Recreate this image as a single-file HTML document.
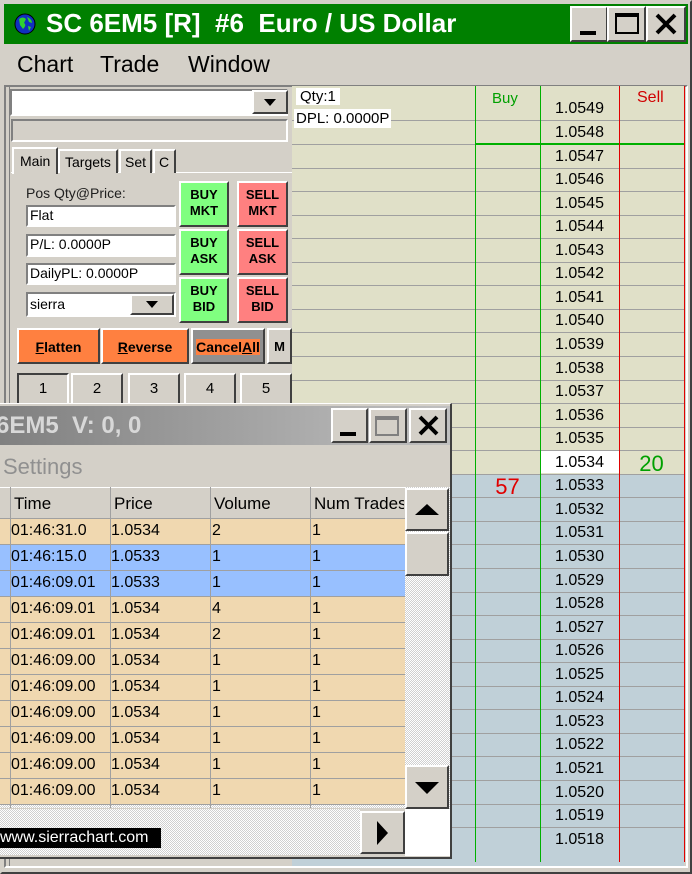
<!DOCTYPE html>
<html><head><style>
*{box-sizing:border-box;margin:0;padding:0}
body{width:692px;height:874px;background:#d4d0c8;position:relative;overflow:hidden;font-family:"Liberation Sans",sans-serif}
.a{position:absolute}
.btn3{background:#d4d0c8;border:2px solid;border-color:#fff #404040 #404040 #fff}
.sunk{border:2px solid;border-color:#808080 #fff #fff #808080}
.inp{position:absolute;background:#fff;border:2px solid;border-color:#808080 #fff #fff #808080;font-size:14px;padding-left:2px;line-height:17px}
.tb{position:absolute;font-weight:bold;font-size:13px;text-align:center;line-height:16px;border:2px solid;border-color:#fff #404040 #404040 #fff;padding-top:4px}
.g{background:#80ff80}.r{background:#ff8080}
.row{position:absolute;left:292px;width:392px;height:24px;border-bottom:1px solid #a0a0a0;font-size:16px}
.row span{position:absolute;left:248px;width:79px;text-align:center;top:3px}
.tr{position:absolute;left:0;width:405px;height:26px;border-bottom:1px solid #a0a0a0;font-size:16px}
.tr span{position:absolute;top:3px}
.num{position:absolute;top:373px;height:32px;font-size:15px;text-align:center;line-height:28px}
</style></head><body>
<div class="a" style="left:0;top:0;width:692px;height:874px;border:2px solid;border-color:#d4d0c8 #404040 #404040 #d4d0c8"></div>
<div class="a" style="left:4px;top:4px;width:684px;height:40px;background:#008000"></div>
<svg class="a" style="left:14px;top:13px" width="22" height="22"><circle cx="11" cy="11" r="10" fill="#1030c0" stroke="#000"/><path d="M5 6 Q9 3 12 6 L10 10 Q13 12 9 16 L6 12Z M13 4 Q18 6 18 10 L15 9Z M14 13 L17 14 L15 18Z" fill="#30d030"/></svg>
<div class="a" style="left:46px;top:8px;color:#fff;font-weight:bold;font-size:26px;white-space:pre">SC 6EM5 [R]  #6  Euro / US Dollar</div>
<div class="a btn3" style="left:570px;top:6px;width:38px;height:36px"><div class="a" style="left:8px;top:23px;width:16px;height:4px;background:#000"></div></div>
<div class="a btn3" style="left:607px;top:6px;width:39px;height:36px"><div class="a" style="left:6px;top:5px;width:24px;height:21px;border:2px solid #000;border-top-width:4px"></div></div>
<div class="a btn3" style="left:646px;top:6px;width:40px;height:36px"><svg class="a" style="left:7px;top:5px" width="22" height="22"><path d="M2 2L20 20M20 2L2 20" stroke="#000" stroke-width="4"/></svg></div>
<div class="a" style="left:17px;top:51px;font-size:23px">Chart</div>
<div class="a" style="left:100px;top:51px;font-size:23px">Trade</div>
<div class="a" style="left:188px;top:51px;font-size:23px">Window</div>
<div class="a" style="left:4px;top:85px;width:684px;height:783px;border:2px solid;border-color:#808080 #fff #fff #808080"></div>
<div class="a" style="left:10px;top:89px;width:278px;height:27px;background:#fff;border:2px solid;border-color:#808080 #fff #fff #808080"></div>
<div class="a btn3" style="left:252px;top:90px;width:36px;height:24px"><div class="a" style="left:10px;top:7px;border-left:6px solid transparent;border-right:6px solid transparent;border-top:7px solid #000"></div></div>
<div class="a sunk" style="left:11px;top:119px;width:277px;height:23px"></div>
<div class="a" style="left:11px;top:172px;width:281px;height:1px;background:#fff"></div>
<div class="a btn3" style="left:12px;top:147px;width:46px;height:27px;border-bottom:none;font-size:14px;padding:4px 0 0 6px">Main</div>
<div class="a btn3" style="left:58px;top:149px;width:60px;height:24px;border-bottom:none;font-size:14px;padding:3px 0 0 5px">Targets</div>
<div class="a btn3" style="left:119px;top:149px;width:33px;height:24px;border-bottom:none;font-size:14px;padding:3px 0 0 4px">Set</div>
<div class="a btn3" style="left:153px;top:149px;width:23px;height:24px;border-bottom:none;font-size:14px;padding:3px 0 0 4px">C</div>
<div class="a" style="left:26px;top:185px;font-size:14px;color:#202020">Pos Qty@Price:</div>
<div class="inp" style="left:26px;top:205px;width:150px;height:22px">Flat</div>
<div class="inp" style="left:26px;top:234px;width:150px;height:23px">P/L: 0.0000P</div>
<div class="inp" style="left:26px;top:263px;width:150px;height:22px">DailyPL: 0.0000P</div>
<div class="inp" style="left:26px;top:292px;width:150px;height:25px;padding-top:2px">sierra</div>
<div class="a btn3" style="left:130px;top:294px;width:44px;height:21px"><div class="a" style="left:14px;top:5px;border-left:6px solid transparent;border-right:6px solid transparent;border-top:7px solid #000"></div></div>
<div class="tb g" style="left:179px;top:181px;width:50px;height:46px">BUY<br>MKT</div>
<div class="tb r" style="left:237px;top:181px;width:51px;height:46px">SELL<br>MKT</div>
<div class="tb g" style="left:179px;top:229px;width:50px;height:46px">BUY<br>ASK</div>
<div class="tb r" style="left:237px;top:229px;width:51px;height:46px">SELL<br>ASK</div>
<div class="tb g" style="left:179px;top:277px;width:50px;height:46px">BUY<br>BID</div>
<div class="tb r" style="left:237px;top:277px;width:51px;height:46px">SELL<br>BID</div>
<div class="tb" style="left:17px;top:328px;width:83px;height:36px;background:#ff8040;font-size:14px;padding-top:9px"><u>F</u>latten</div>
<div class="tb" style="left:101px;top:328px;width:88px;height:36px;background:#ff8040;font-size:14px;padding-top:9px"><u>R</u>everse</div>
<div class="tb" style="left:191px;top:328px;width:74px;height:36px;background:#909090;font-size:14px;padding-top:9px"><span style="background:#ff8040">Cancel<u>A</u>ll</span></div>
<div class="tb" style="left:267px;top:328px;width:25px;height:36px;background:#d4d0c8;font-size:13px;padding-top:9px">M</div>
<div class="num sunk" style="left:17px;width:52px;border-color:#404040 #fff #fff #404040">1</div>
<div class="num btn3" style="left:71px;width:52px">2</div>
<div class="num btn3" style="left:128px;width:52px">3</div>
<div class="num btn3" style="left:184px;width:52px">4</div>
<div class="num btn3" style="left:240px;width:52px">5</div>
<div class="a" style="left:6px;top:86px;width:4px;height:780px;border-right:1px solid #808080"></div>
<div class="a" style="left:292px;top:86px;width:392px;height:388px;background:#e0e0c8"></div>
<div class="a" style="left:292px;top:474px;width:392px;height:392px;background:#c0d0d8"></div>
<div class="a" style="left:292px;top:86px;width:392px;height:35px;border-bottom:1px solid #a0a0a0;font-size:16px">
<span class="a" style="left:248px;top:14px;width:79px;text-align:center">1.0549</span></div>
<div class="a" style="left:296px;top:88px;background:#fff;font-size:15px;padding:0 4px 0 4px">Qty:1</div>
<div class="a" style="left:294px;top:109px;background:#fff;font-size:15px;padding:1px 2px">DPL: 0.0000P</div>
<div class="a" style="left:492px;top:90px;color:#00a000;font-size:15px">Buy</div>
<div class="a" style="left:637px;top:89px;color:#d00000;font-size:16px">Sell</div>
<div class="row" style="top:121px"><span>1.0548</span></div>
<div class="a" style="left:475px;top:143px;width:209px;height:2px;background:#00b000"></div>
<div class="row" style="top:145px"><span>1.0547</span></div>
<div class="row" style="top:168px"><span>1.0546</span></div>
<div class="row" style="top:192px"><span>1.0545</span></div>
<div class="row" style="top:215px"><span>1.0544</span></div>
<div class="row" style="top:239px"><span>1.0543</span></div>
<div class="row" style="top:262px"><span>1.0542</span></div>
<div class="row" style="top:286px"><span>1.0541</span></div>
<div class="row" style="top:309px"><span>1.0540</span></div>
<div class="row" style="top:333px"><span>1.0539</span></div>
<div class="row" style="top:357px"><span>1.0538</span></div>
<div class="row" style="top:380px"><span>1.0537</span></div>
<div class="row" style="top:404px"><span>1.0536</span></div>
<div class="row" style="top:427px"><span>1.0535</span></div>
<div class="row" style="top:451px"><span style="background:#fff;top:0;height:22px;padding-top:3px">1.0534</span><span style="left:327px;width:65px;color:#00a000;font-size:22px;top:0">20</span></div>
<div class="row" style="top:474px"><span>1.0533</span><span style="left:183px;width:65px;color:#e00000;font-size:22px;top:0">57</span></div>
<div class="row" style="top:498px"><span>1.0532</span></div>
<div class="row" style="top:521px"><span>1.0531</span></div>
<div class="row" style="top:545px"><span>1.0530</span></div>
<div class="row" style="top:569px"><span>1.0529</span></div>
<div class="row" style="top:592px"><span>1.0528</span></div>
<div class="row" style="top:616px"><span>1.0527</span></div>
<div class="row" style="top:639px"><span>1.0526</span></div>
<div class="row" style="top:663px"><span>1.0525</span></div>
<div class="row" style="top:686px"><span>1.0524</span></div>
<div class="row" style="top:710px"><span>1.0523</span></div>
<div class="row" style="top:733px"><span>1.0522</span></div>
<div class="row" style="top:757px"><span>1.0521</span></div>
<div class="row" style="top:781px"><span>1.0520</span></div>
<div class="row" style="top:804px"><span>1.0519</span></div>
<div class="row" style="top:828px;border:none"><span>1.0518</span></div>
<div class="a" style="left:475px;top:86px;width:1px;height:776px;background:#00b000"></div>
<div class="a" style="left:540px;top:86px;width:1px;height:776px;background:#00b000"></div>
<div class="a" style="left:619px;top:86px;width:1px;height:776px;background:#e00000"></div>
<div class="a" style="left:684px;top:86px;width:1px;height:776px;background:#e00000"></div>
<div class="a" style="left:0;top:403px;width:452px;height:456px;background:#d4d0c8;border-right:2px solid #404040;border-bottom:2px solid #404040;border-top:1px solid #fff"></div>
<div class="a" style="left:0;top:406px;width:450px;height:39px;background:linear-gradient(90deg,#808080,#c0c0c0)"></div>
<div class="a" style="left:-4px;top:412px;color:#d8d8d8;font-weight:bold;font-size:24px;white-space:pre">6EM5  V: 0, 0</div>
<div class="a btn3" style="left:331px;top:408px;width:37px;height:35px"><div class="a" style="left:7px;top:22px;width:16px;height:4px;background:#000"></div></div>
<div class="a btn3" style="left:369px;top:408px;width:38px;height:35px"><div class="a" style="left:4px;top:6px;width:24px;height:20px;border:2px solid #808080;border-top-width:4px"></div></div>
<div class="a btn3" style="left:409px;top:408px;width:38px;height:35px"><svg class="a" style="left:7px;top:5px" width="21" height="21"><path d="M2 2L19 19M19 2L2 19" stroke="#000" stroke-width="4"/></svg></div>
<div class="a" style="left:3px;top:454px;color:#909090;font-size:22px">Settings</div>
<div class="a" style="left:0;top:487px;width:405px;height:321px;background:repeating-conic-gradient(#d0d0d0 0 25%,#fff 0 50%) 0 0/2px 2px"></div>
<div class="a" style="left:0;top:487px;width:405px;height:32px;background:#d4d0c8;border-top:1px solid #fff;border-bottom:1px solid #a0a0a0;font-size:17px">
<span class="a" style="left:14px;top:6px">Time</span><span class="a" style="left:114px;top:6px">Price</span><span class="a" style="left:214px;top:6px">Volume</span><span class="a" style="left:314px;top:6px;white-space:nowrap;width:90px;overflow:hidden">Num Trades</span></div>
<div class="tr" style="top:519px;background:#f0d8b0"><span style="left:11px">01:46:31.0</span><span style="left:111px">1.0534</span><span style="left:212px">2</span><span style="left:312px">1</span></div>
<div class="tr" style="top:545px;background:#98c0ff"><span style="left:11px">01:46:15.0</span><span style="left:111px">1.0533</span><span style="left:212px">1</span><span style="left:312px">1</span></div>
<div class="tr" style="top:571px;background:#98c0ff"><span style="left:11px">01:46:09.01</span><span style="left:111px">1.0533</span><span style="left:212px">1</span><span style="left:312px">1</span></div>
<div class="tr" style="top:597px;background:#f0d8b0"><span style="left:11px">01:46:09.01</span><span style="left:111px">1.0534</span><span style="left:212px">4</span><span style="left:312px">1</span></div>
<div class="tr" style="top:623px;background:#f0d8b0"><span style="left:11px">01:46:09.01</span><span style="left:111px">1.0534</span><span style="left:212px">2</span><span style="left:312px">1</span></div>
<div class="tr" style="top:649px;background:#f0d8b0"><span style="left:11px">01:46:09.00</span><span style="left:111px">1.0534</span><span style="left:212px">1</span><span style="left:312px">1</span></div>
<div class="tr" style="top:675px;background:#f0d8b0"><span style="left:11px">01:46:09.00</span><span style="left:111px">1.0534</span><span style="left:212px">1</span><span style="left:312px">1</span></div>
<div class="tr" style="top:701px;background:#f0d8b0"><span style="left:11px">01:46:09.00</span><span style="left:111px">1.0534</span><span style="left:212px">1</span><span style="left:312px">1</span></div>
<div class="tr" style="top:727px;background:#f0d8b0"><span style="left:11px">01:46:09.00</span><span style="left:111px">1.0534</span><span style="left:212px">1</span><span style="left:312px">1</span></div>
<div class="tr" style="top:753px;background:#f0d8b0"><span style="left:11px">01:46:09.00</span><span style="left:111px">1.0534</span><span style="left:212px">1</span><span style="left:312px">1</span></div>
<div class="tr" style="top:779px;background:#f0d8b0"><span style="left:11px">01:46:09.00</span><span style="left:111px">1.0534</span><span style="left:212px">1</span><span style="left:312px">1</span></div>
<div class="a" style="left:10px;top:487px;width:1px;height:321px;background:#a0a0a0"></div>
<div class="a" style="left:110px;top:487px;width:1px;height:321px;background:#a0a0a0"></div>
<div class="a" style="left:210px;top:487px;width:1px;height:321px;background:#a0a0a0"></div>
<div class="a" style="left:310px;top:487px;width:1px;height:321px;background:#a0a0a0"></div>
<div class="a" style="left:405px;top:487px;width:45px;height:322px;background:repeating-conic-gradient(#d0d0d0 0 25%,#fff 0 50%) 0 0/2px 2px"></div>
<div class="a btn3" style="left:405px;top:488px;width:44px;height:43px"><div class="a" style="left:8px;top:14px;border-left:12px solid transparent;border-right:12px solid transparent;border-bottom:11px solid #000"></div></div>
<div class="a btn3" style="left:405px;top:532px;width:44px;height:44px"></div>
<div class="a btn3" style="left:405px;top:765px;width:44px;height:44px"><div class="a" style="left:8px;top:15px;border-left:12px solid transparent;border-right:12px solid transparent;border-top:12px solid #000"></div></div>
<div class="a" style="left:0;top:809px;width:360px;height:46px;background:repeating-conic-gradient(#d0d0d0 0 25%,#fff 0 50%) 0 0/2px 2px"></div>
<div class="a btn3" style="left:360px;top:811px;width:45px;height:43px"><div class="a" style="left:15px;top:8px;border-top:12px solid transparent;border-bottom:12px solid transparent;border-left:11px solid #000"></div></div>
<div class="a" style="left:405px;top:809px;width:45px;height:47px;background:#fff"></div>
<div class="a" style="left:0;top:828px;width:161px;height:20px;background:#000;color:#fff;font-size:16px;line-height:20px">www.sierrachart.com</div>
</body></html>
